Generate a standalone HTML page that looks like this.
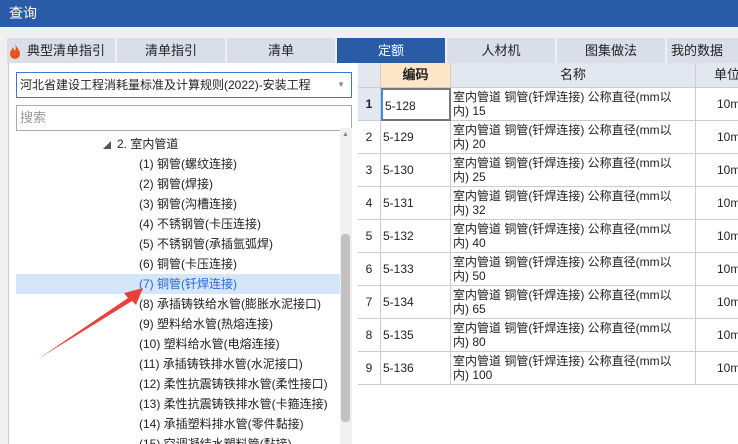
<!DOCTYPE html>
<html><head><meta charset="utf-8"><style>
*{margin:0;padding:0;box-sizing:border-box}
html,body{width:738px;height:444px;overflow:hidden}
body{background:#f0f0f0;font-family:"Liberation Sans","Noto Sans CJK SC",sans-serif;font-size:13px;color:#222;position:relative}
.title{position:absolute;left:0;top:0;width:738px;height:27px;background:#2a5ba6;color:#fff;font-size:14px;line-height:27px;padding-left:9px}
.tab{position:absolute;top:38px;height:25px;width:108px;background:#d9dee8;text-align:center;line-height:25px;font-size:13px;color:#222;white-space:nowrap;overflow:hidden}
.tab.act{background:#2a5ba6;color:#fff}
.left{position:absolute;left:8px;top:63px;width:350px;height:381px;background:#fff;border-left:1px solid #ccc}
.dd{position:absolute;left:16px;top:72px;width:336px;height:26px;border:1px solid #3a78d4;background:#fff;line-height:24px;padding-left:3px;font-size:12px;white-space:nowrap}
.sr{position:absolute;left:16px;top:105px;width:336px;height:26px;border:1px solid #aaa;background:#fff;line-height:24px;padding-left:3px;color:#999}
.tr{position:absolute;left:16px;width:324px;height:20px;line-height:20px;font-size:12px;white-space:nowrap;overflow:hidden}
.sel{background:#d6e6fa;color:#2a6ad4}
.sb{position:absolute;left:340px;top:128px;width:12px;height:316px;background:#f0f0f0}
.thumb{position:absolute;left:341px;top:234px;width:9px;height:188px;background:#c2c2c2;border-radius:4px}
.grid{position:absolute;left:358px;top:63px;width:380px;height:381px;background:#fff}
.c{position:absolute;border-right:1px solid #ccc;border-bottom:1px solid #ccc;font-family:"Liberation Sans","WenQuanYi Zen Hei",sans-serif;font-size:12px;white-space:nowrap;overflow:hidden}
.h{background:#e3e8f0;text-align:center;line-height:24px;font-size:13px}
</style></head><body>
<div class="title">查询</div>
<div class="tab" style="left:7px;padding-left:10px">典型清单指引</div>
<svg style="position:absolute;left:9px;top:43px" width="12" height="16"><path d="M6 1C8 5 11 7 11 11A5 5 0 0 1 1 11C1 8 3 7 4 4C5 6 5 7 6 8C7 6 7 4 6 1Z" fill="#e8531d"/></svg>
<div class="tab" style="left:117px">清单指引</div>
<div class="tab" style="left:227px">清单</div>
<div class="tab act" style="left:337px">定额</div>
<div class="tab" style="left:447px">人材机</div>
<div class="tab" style="left:557px">图集做法</div>
<div class="tab" style="left:667px;width:80px;text-align:left;padding-left:4px">我的数据</div>
<div class="left"></div>
<div class="dd">河北省建设工程消耗量标准及计算规则(2022)-安装工程<span style="position:absolute;right:6px;top:0;color:#888;font-size:8px">▼</span></div>
<div class="sr">搜索</div>
<div class="tr" style="top:134px;padding-left:87px"><span style="font-size:8px;color:#555;margin-right:6px">◢</span>2. 室内管道</div>
<div class="tr" style="top:154px;padding-left:123px">(1) 钢管(螺纹连接)</div>
<div class="tr" style="top:174px;padding-left:123px">(2) 钢管(焊接)</div>
<div class="tr" style="top:194px;padding-left:123px">(3) 钢管(沟槽连接)</div>
<div class="tr" style="top:214px;padding-left:123px">(4) 不锈钢管(卡压连接)</div>
<div class="tr" style="top:234px;padding-left:123px">(5) 不锈钢管(承插氩弧焊)</div>
<div class="tr" style="top:254px;padding-left:123px">(6) 铜管(卡压连接)</div>
<div class="tr sel" style="top:274px;padding-left:123px">(7) 铜管(钎焊连接)</div>
<div class="tr" style="top:294px;padding-left:123px">(8) 承插铸铁给水管(膨胀水泥接口)</div>
<div class="tr" style="top:314px;padding-left:123px">(9) 塑料给水管(热熔连接)</div>
<div class="tr" style="top:334px;padding-left:123px">(10) 塑料给水管(电熔连接)</div>
<div class="tr" style="top:354px;padding-left:123px">(11) 承插铸铁排水管(水泥接口)</div>
<div class="tr" style="top:374px;padding-left:123px">(12) 柔性抗震铸铁排水管(柔性接口)</div>
<div class="tr" style="top:394px;padding-left:123px">(13) 柔性抗震铸铁排水管(卡箍连接)</div>
<div class="tr" style="top:414px;padding-left:123px">(14) 承插塑料排水管(零件黏接)</div>
<div class="tr" style="top:434px;padding-left:123px">(15) 空调凝结水塑料管(黏接)</div>
<div class="sb"></div><div class="thumb"></div>
<div style="position:absolute;left:342px;top:131px;font-size:7px;color:#888">▲</div>
<svg style="position:absolute;left:0;top:0" width="738" height="444"><path d="M38 359L128 298L124 293L143 288L136 305L132 301Z" fill="#e8413a"/></svg>
<div class="grid"></div>
<div class="c h" style="left:358px;top:63px;width:23px;height:25px"></div>
<div class="c h" style="left:381px;top:63px;width:70px;height:25px;background:#fde6c8;font-weight:bold">编码</div>
<div class="c h" style="left:451px;top:63px;width:245px;height:25px">名称</div>
<div class="c h" style="left:696px;top:63px;width:60px;height:25px;text-align:left;padding-left:18px">单位</div>
<div id="rows"></div>
<script>
var s="",sz=[15,20,25,32,40,50,65,80,100];
for(var i=0;i<9;i++){var t=88+i*33;
s+='<div class="c" style="left:358px;top:'+t+'px;width:23px;height:33px;line-height:32px;text-align:center;background:'+(i==0?'#e3e8f0;font-weight:bold':'#fff')+'">'+(i+1)+'</div>';
s+='<div class="c" style="left:381px;top:'+t+'px;width:70px;height:33px;line-height:32px;padding-left:2px;'+(i==0?'border:2px solid #777;border-left:2px solid #3a8ee6;':'')+'">5-'+(128+i)+'</div>';
s+='<div class="c" style="left:451px;top:'+t+'px;width:245px;height:33px;line-height:14px;padding:2px 0 0 2px">室内管道 铜管(钎焊连接) 公称直径(mm以<br>内) '+sz[i]+'</div>';
s+='<div class="c" style="left:696px;top:'+t+'px;width:60px;height:33px;line-height:32px;padding-left:21px">10m</div>';}
document.getElementById('rows').innerHTML=s;
</script>
</body></html>
